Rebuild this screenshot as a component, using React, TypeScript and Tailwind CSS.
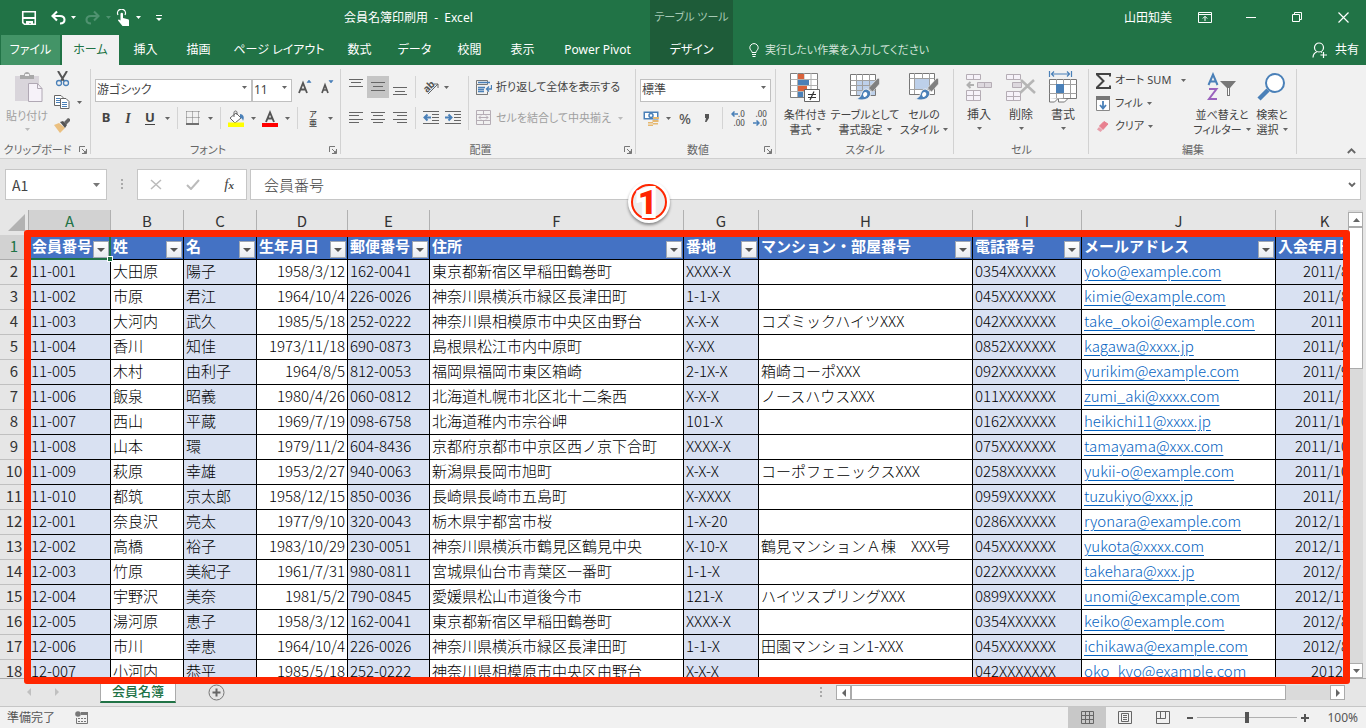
import React from "react";

type Kids = { children?: React.ReactNode };

const UI = "font-['Noto_Sans','Noto_Sans_CJK_JP',sans-serif] [font-feature-settings:'palt']";
const CELL = "font-['Noto_Sans_CJK_JP',sans-serif] [font-feature-settings:normal]";

function Ico({ w, h, children }: Kids & { w: number; h: number }) {
  return (
    <svg width={w} height={h} viewBox={`0 0 ${w} ${h}`} fill="none" className="shrink-0" aria-hidden="true">
      {children}
    </svg>
  );
}

function Caret({ color = "#666" }: { color?: string }) {
  return (
    <Ico w={5} h={3}>
      <path d="M0 0h5L2.5 3z" fill={color} />
    </Ico>
  );
}

function CaretButton({ label, color, className = "w-3" }: { label: string; color?: string; className?: string }) {
  return (
    <button aria-label={label} className={`flex h-[22px] shrink-0 items-center justify-center ${className}`}>
      <Caret color={color} />
    </button>
  );
}

function Tool({ label, active, children }: Kids & { label: string; active?: boolean }) {
  return (
    <button
      aria-label={label}
      className={`flex h-[22px] w-[22px] shrink-0 items-center justify-center ${active ? "bg-[#c5c5c5]" : ""}`}
    >
      {children}
    </button>
  );
}

function Sep() {
  return <div className="mx-1 h-[22px] w-px shrink-0 bg-[#d4d4d4]" />;
}

function Launcher() {
  return (
    <button aria-label="詳細設定" className="absolute right-1 bottom-1">
      <Ico w={8} h={8}>
        <path d="M.5 6V.5H6M3 3l3 3M7.5 3v4.5H3" stroke="#777" />
        <path d="M7.5 4v3.5H4z" fill="#777" />
      </Ico>
    </button>
  );
}

function Group({ title, width, launcher, children }: Kids & { title: string; width: string; launcher?: boolean }) {
  return (
    <section aria-label={title} className={`relative flex shrink-0 flex-col ${width}`}>
      <div className="h-[76px]">{children}</div>
      <div className="text-center text-[11px] leading-[17px] text-[#666]">{title}</div>
      {launcher && <Launcher />}
      <div className="absolute top-1 right-0 h-[85px] w-px bg-[#d2d2d2]" />
    </section>
  );
}

function Lines({ rows }: { rows: [number, number, number][] }) {
  return (
    <Ico w={16} h={16}>
      {rows.map(([x1, x2, y], i) => (
        <path key={i} d={`M${x1} ${y}.5H${x2}`} stroke="#666" />
      ))}
    </Ico>
  );
}

function Big({ width, icon, lines }: { width: string; icon: React.ReactNode; lines: string[] }) {
  return (
    <button className={`flex shrink-0 flex-col items-center text-[11px] leading-[15px] whitespace-nowrap text-[#444] ${width}`}>
      <span className="mb-1 flex h-[32px] items-center">{icon}</span>
      <span>{lines[0]}</span>
      <span className="flex h-[15px] items-center gap-1">
        {lines[1]}
        <Caret />
      </span>
    </button>
  );
}

const Brush = () => (
  <>
    <path d="M29 7l1.500 1v5l-7 8-4-4z" fill="#808080" stroke="#f1f1f1" strokeWidth=".6" />
    <path d="M18 18c-4 0-5 3-6 6-1 2-2 3-5 4 5 2 12 1 14-3 1-2 1-4 0-5z" fill="#4a80b8" stroke="#f1f1f1" />
    <path d="M14 24c0-3 3-4 4-2s-1 4-3 4" fill="#fff" />
  </>
);

function TopTab({ children, width, kind = "plain" }: Kids & { width: string; kind?: "plain" | "file" | "active" }) {
  const look = { plain: "text-white", file: "ml-px mr-0.5 bg-[#439467] text-white", active: "bg-[#f1f1f1] text-[#217346]" }[kind];
  return (
    <button role="tab" className={`h-[30px] shrink-0 text-center text-[12px] whitespace-nowrap ${width} ${look}`}>
      {children}
    </button>
  );
}

function Header() {
  return (
    <header className="flex h-[65px] shrink-0 bg-[#217346] text-white">
      <div className="flex w-[650px] shrink-0 flex-col">
        <div className="flex h-[35px] items-center">
          <div className="flex w-[344px] items-center pl-[21px]">
            <button aria-label="上書き保存" className="mr-[14px]">
              <Ico w={16} h={16}>
                <path d="M1.75 1.75h12.5v12.5H3.5l-1.75-1.7z" stroke="#fff" strokeWidth="1.6" />
                <path d="M2 7h12v2H2zM5 11h7v4h-2v-2H8v2H5z" fill="#fff" />
              </Ico>
            </button>
            <button aria-label="元に戻す">
              <Ico w={15} h={16}>
                <path d="M1.5 6H9c3 0 4.500 1.500 4.500 3.800S12 13.500 9 13.500M6 1.500L1.500 6 6 10.500" stroke="#fff" strokeWidth="2.100" />
              </Ico>
            </button>
            <CaretButton label="元に戻す履歴" color="#fff" className="ml-[1px] w-[12px]" />
            <button aria-label="やり直し" className="ml-[6px]">
              <Ico w={15} h={16}>
                <path d="M13.500 6H6C3 6 1.500 7.500 1.500 9.800S3 13.500 6 13.500M9 1.500L13.500 6 9 10.500" stroke="#4f9270" strokeWidth="2.100" />
              </Ico>
            </button>
            <CaretButton label="やり直し履歴" color="#4f9270" className="ml-[2px] w-[12px]" />
            <button aria-label="タッチ/マウス モードの切り替え" className="ml-[2px]">
              <Ico w={16} h={18}>
                <path d="M2 6a4 4 0 1 1 7 0" stroke="#fff" strokeWidth="1.200" />
                <path d="M4.500 5a1.200 1.200 0 0 1 2.500 0v4l5 1.200c1 .3 1 1 1 2V17H6.500L2 11.500c0-1.300 1-1.500 2.500 0z" fill="#fff" />
              </Ico>
            </button>
            <CaretButton label="モード" color="#fff" className="w-[12px]" />
            <button aria-label="クイック アクセス ツール バーのカスタマイズ" className="ml-3">
              <Ico w={6} h={6}>
                <path d="M0 .5h6" stroke="#fff" />
                <path d="M0 3h6L3 6z" fill="#fff" />
              </Ico>
            </button>
          </div>
          <h1 className="text-[12px] whitespace-pre">会員名簿印刷用  -  Excel</h1>
        </div>
        <div role="tablist" className="flex">
          <TopTab width="w-[59px]" kind="file">ファイル</TopTab>
          <TopTab width="w-[57px]" kind="active">ホーム</TopTab>
          <TopTab width="w-[53px]">挿入</TopTab>
          <TopTab width="w-[53px]">描画</TopTab>
          <TopTab width="w-[108px]">ページ レイアウト</TopTab>
          <TopTab width="w-[53px]">数式</TopTab>
          <TopTab width="w-[57px]">データ</TopTab>
          <TopTab width="w-[53px]">校閲</TopTab>
          <TopTab width="w-[53px]">表示</TopTab>
          <TopTab width="w-[97px]">Power Pivot</TopTab>
        </div>
      </div>
      <div className="flex w-[83px] shrink-0 flex-col items-center bg-[#1e5c39] text-[11px]">
        <div className="flex h-[35px] items-center whitespace-nowrap text-[#a6c9b4]">テーブル ツール</div>
        <TopTab width="w-[83px]">デザイン</TopTab>
      </div>
      <div className="flex min-w-0 flex-1 flex-col text-[12px]">
        <div className="flex h-[35px] items-center justify-end">
          <span className="mr-[10px]">山田知美</span>
          <button aria-label="リボンの表示オプション" className="flex w-[46px] justify-center">
            <Ico w={14} h={11}>
              <path d="M.5.5h13v10H.5zM.5 2.500h13M7 9V4.500M4.800 6.500L7 4.300l2.200 2.200" stroke="#fff" />
            </Ico>
          </button>
          <button aria-label="最小化" className="flex w-[46px] justify-center">
            <Ico w={10} h={2}><path d="M0 .5h10" stroke="#fff" /></Ico>
          </button>
          <button aria-label="元に戻す(縮小)" className="flex w-[46px] justify-center">
            <Ico w={11} h={11}><path d="M.5 2.500h7v7h-7zM2.500 2.500v-2h7v7h-2" stroke="#fff" /></Ico>
          </button>
          <button aria-label="閉じる" className="flex w-[46px] justify-center">
            <Ico w={11} h={11}><path d="M.5.5l10 10M10.500.5l-10 10" stroke="#fff" strokeWidth="1.200" /></Ico>
          </button>
        </div>
        <div className="flex h-[30px] items-center justify-between pr-[7px] pl-4">
          <button className="flex items-center gap-[6px] text-[11px] text-[#d3e3da]">
            <Ico w={10} h={14}>
              <path d="M3 9.500C3 7.500.8 7 .8 4.800a4.200 4.200 0 0 1 8.400 0C9.200 7 7 7.500 7 9.500zM3 11.500h4M3.500 13.500h3" stroke="#fff" />
            </Ico>
            実行したい作業を入力してください
          </button>
          <button className="flex items-center gap-[7px]">
            <Ico w={16} h={17}>
              <circle cx="7" cy="5.500" r="4.500" stroke="#fff" strokeWidth="1.200" />
              <path d="M1 15.500c.2-3.500 2-5 4-5.700M9 9.800l1 .7M11.500 10v6M8.500 13H15" stroke="#fff" strokeWidth="1.200" />
            </Ico>
            共有
          </button>
        </div>
      </div>
    </header>
  );
}

function ClipboardGroup() {
  return (
    <Group title="クリップボード" width="w-[91px] pr-4" launcher>
      <div className="flex pt-[6px]">
        <button className="flex w-[54px] shrink-0 flex-col items-center text-[11px] leading-[15px] whitespace-nowrap text-[#a0a0a0]">
          <span className="mb-1 h-[33px] pl-1">
            <Ico w={30} h={32}>
              <path d="M1 5h24v25H1z" fill="#d9d5db" />
              <path d="M6 8V4h4c0-4 6-4 6 0h4v4z" fill="#a9a9a9" />
              <path d="M11 3h4v2h-4z" fill="#f1f1f1" />
              <path d="M14.500 12.500h9l4.500 5v13H14.500z" fill="#f6f2f9" stroke="#b0a8b4" />
              <path d="M23.500 12.500v5H28" stroke="#b0a8b4" />
            </Ico>
          </span>
          貼り付け
          <span className="flex h-3 items-center"><Caret color="#bbb" /></span>
        </button>
        <div className="flex shrink-0 flex-col">
          <button aria-label="切り取り" className="flex h-[16px] items-center pl-px">
            <Ico w={16} h={16}>
              <path d="M3 0l6 10M12 0L6 10" stroke="#555" strokeWidth="2" />
              <circle cx="4" cy="12" r="2.500" stroke="#4a80b8" strokeWidth="1.300" />
              <circle cx="11" cy="12" r="2.500" stroke="#4a80b8" strokeWidth="1.300" />
            </Ico>
          </button>
          <div className="mt-[4px] flex">
            <button aria-label="コピー" className="flex h-[22px] items-center">
              <Ico w={17} h={15}>
                <path d="M.5.5H7l2 2v8H.5z" fill="#fff" stroke="#666" />
                <path d="M2 3.500h4M2 5.500h4M2 7.500h4" stroke="#4a80b8" />
                <path d="M6.500 3.500H12l3 3v7H6.500z" fill="#fff" stroke="#666" />
                <path d="M8 7.500h5M8 9.500h5M8 11.500h5" stroke="#4a80b8" />
              </Ico>
            </button>
            <CaretButton label="コピーのオプション" className="ml-[2px] w-3" />
          </div>
          <button aria-label="書式のコピー/貼り付け" className="mt-[4px] flex h-[16px] items-center">
            <Ico w={17} h={15}>
              <path d="M0 7l5-2 6 5-5 5z" fill="#ebc080" />
              <path d="M6 4l3-1 4 4-2 3z" fill="#555" />
              <path d="M10 4l4-4 2 1v2l-4 4z" fill="#666" />
            </Ico>
          </button>
        </div>
      </div>
    </Group>
  );
}

function Combo({ label, value, width }: { label: string; value: string; width: string }) {
  return (
    <div className={`relative h-[23px] shrink-0 ${width}`}>
      <select aria-label={label} className="h-full w-full appearance-none border border-[#c0c0c0] bg-white pl-px text-[12px] text-[#444]">
        <option>{value}</option>
      </select>
      <span className="pointer-events-none absolute top-[10px] right-[5px]"><Caret /></span>
    </div>
  );
}

function FontGroup() {
  return (
    <Group title="フォント" width="w-[250px] pr-4" launcher>
      <div className="flex flex-col gap-2 pt-[11px] pl-1">
        <div className="flex">
          <Combo label="フォント" value="游ゴシック" width="w-[157px]" />
          <Combo label="フォント サイズ" value="11" width="w-[40px]" />
          <div className="flex pl-[2px]">
            <Tool label="フォント サイズの拡大">
              <Ico w={14} h={16}>
                <path d="M1 14L5 4l4 10M2.500 10.500h5" stroke="#555" strokeWidth="1.800" />
                <path d="M9 3.500h4L11 1z" fill="#4a80b8" stroke="#4a80b8" strokeWidth=".6" />
              </Ico>
            </Tool>
            <Tool label="フォント サイズの縮小">
              <Ico w={14} h={16}>
                <path d="M2 14l3-8 3 8M3 11h4" stroke="#555" strokeWidth="1.700" />
                <path d="M9 1.500h4L11 4z" fill="#4a80b8" stroke="#4a80b8" strokeWidth=".6" />
              </Ico>
            </Tool>
          </div>
        </div>
        <div className="flex text-[13px] text-[#444]">
          <Tool label="太字"><b>B</b></Tool>
          <Tool label="斜体"><b className="font-['Liberation_Serif'] text-[14px] italic">I</b></Tool>
          <Tool label="下線"><b className="border-b border-[#444] leading-[13px]">U</b></Tool>
          <CaretButton label="下線の種類" />
          <Sep />
          <Tool label="罫線">
            <Ico w={14} h={14}>
              <path d="M.5.5h13M.5 6.500h13M.5.5v12M6.500.5v12M12.500.5v12" stroke="#777" strokeDasharray="1 1" />
              <path d="M0 13h13" stroke="#444" strokeWidth="1.500" />
            </Ico>
          </Tool>
          <CaretButton label="罫線の種類" />
          <Sep />
          <Tool label="塗りつぶしの色">
            <Ico w={17} h={17}>
              <path d="M8 3l5 5-6 5-5-5z" fill="#fff" stroke="#666" />
              <path d="M6 7V2.500c0-2 3-2 3 0V5" stroke="#666" />
              <path d="M12 4c3 0 5 3 3 7-.5-2-1-3-3-3z" fill="#4a80b8" />
              <path d="M0 12.500h16V17H0z" fill="#ff0" />
            </Ico>
          </Tool>
          <CaretButton label="塗りつぶしの色一覧" />
          <Tool label="フォントの色">
            <Ico w={16} h={17}>
              <path d="M4 12L8 2.500l4 9.500M5.500 8.500h5" stroke="#555" strokeWidth="1.900" />
              <path d="M0 13h16v4H0z" fill="#f00" />
            </Ico>
          </Tool>
          <CaretButton label="フォントの色一覧" />
          <Sep />
          <Tool label="ふりがなの表示/非表示">
            <span className="flex flex-col text-[8px] leading-[9px] font-medium"><span>ア</span><span>亜</span></span>
          </Tool>
          <CaretButton label="ふりがな" />
        </div>
      </div>
    </Group>
  );
}

function AlignGroup() {
  return (
    <Group title="配置" width="w-[295px] pr-4" launcher>
      <div className="flex pt-[11px] pl-1">
        <div className="flex flex-col gap-2">
          <div className="flex h-[23px]">
            <Tool label="上揃え"><Lines rows={[[1, 15, 0], [3, 13, 3], [1, 15, 7]]} /></Tool>
            <Tool label="上下中央揃え" active><Lines rows={[[1, 15, 3], [3, 13, 7], [1, 15, 11]]} /></Tool>
            <Tool label="下揃え"><Lines rows={[[1, 15, 8], [3, 13, 12], [1, 15, 15]]} /></Tool>
            <Sep />
            <Tool label="方向">
              <Ico w={17} h={17}>
                <text x="0" y="11" transform="rotate(-45 6 8)" fontSize="10" fontWeight="700" fill="#555">ab</text>
                <path d="M5 15L15 5M11 5h4v4" stroke="#666" />
              </Ico>
            </Tool>
            <CaretButton label="方向の種類" className="w-2" />
          </div>
          <div className="flex">
            <Tool label="左揃え"><Lines rows={[[1, 15, 2], [1, 11, 5], [1, 15, 9], [1, 11, 12]]} /></Tool>
            <Tool label="中央揃え"><Lines rows={[[1, 15, 2], [3, 13, 5], [1, 15, 9], [3, 13, 12]]} /></Tool>
            <Tool label="右揃え"><Lines rows={[[1, 15, 2], [5, 15, 5], [1, 15, 9], [5, 15, 12]]} /></Tool>
            <Sep />
            <Tool label="インデントを減らす">
              <Ico w={16} h={14}>
                <path d="M0 .5h16M9 3.500h7M9 6.500h7M9 9.500h7M0 12.500h16" stroke="#666" />
                <path d="M8 6.500H2M4.500 3.500l-3 3 3 3" stroke="#4a80b8" strokeWidth="2" />
              </Ico>
            </Tool>
            <Tool label="インデントを増やす">
              <Ico w={16} h={14}>
                <path d="M0 .5h16M9 3.500h7M9 6.500h7M9 9.500h7M0 12.500h16" stroke="#666" />
                <path d="M0 6.500h6M3.500 3.500l3 3-3 3" stroke="#4a80b8" strokeWidth="2" />
              </Ico>
            </Tool>
          </div>
        </div>
        <div className="mx-[4px] h-[54px] w-px shrink-0 bg-[#d4d4d4]" />
        <div className="flex flex-col gap-2 pl-[3px] text-[11px] whitespace-nowrap">
          <button className="flex h-[23px] items-center gap-1 text-[#444]">
            <Ico w={16} h={16}>
              <path d="M.5.5h11v4H.5zM.5 4.500v10h11v-3M.5 14.500h11" stroke="#777" />
              <path d="M2 2.500h12M2 7.500h7M2 9.500h6M2 11.500h6M15.500 5v4H11M13 6.500L10.500 9l2.500 2.500" stroke="#4a80b8" strokeWidth="1.300" />
            </Ico>
            折り返して全体を表示する
          </button>
          <div className="flex items-center">
            <button className="flex h-[22px] items-center gap-1 text-[#a0a0a0]">
              <Ico w={16} h={16}>
                <path d="M.5.5h14v14H.5zM.5 4.500h14M.5 10.500h14M7.500.5v4M7.500 10.500v4M3 7.500h9M5 5.500l-2 2 2 2M10 5.500l2 2-2 2" stroke="#b5adb5" />
              </Ico>
              セルを結合して中央揃え
            </button>
            <CaretButton label="結合の種類" color="#bbb" className="ml-1 w-3" />
          </div>
        </div>
      </div>
    </Group>
  );
}

function NumberGroup() {
  return (
    <Group title="数値" width="w-[140px] pr-4" launcher>
      <div className="flex w-[136px] flex-col gap-2 pt-[11px] pl-1">
        <Combo label="表示形式" value="標準" width="w-[131px]" />
        <div className="flex text-[#555]">
          <Tool label="通貨表示形式">
            <Ico w={17} h={17}>
              <path d="M.5 1.500h15v8H.5z" fill="#4a80b8" />
              <path d="M2 3h12v5H2z" fill="#fff" />
              <circle cx="8" cy="5.500" r="2" stroke="#4a80b8" strokeWidth="1.500" />
              <path d="M10 7h6v2h-6zM9.500 10h6v2h-6zM5 12h5v1.500H5zM5 14.500h5V16H5zM10 13h5v1.500h-5z" fill="#e6b870" />
            </Ico>
          </Tool>
          <CaretButton label="通貨の種類" />
          <Tool label="パーセント スタイル"><span className="text-[14px] font-medium">%</span></Tool>
          <Tool label="桁区切りスタイル">
            <Ico w={6} h={9}><path d="M1 0h4v4L2.500 8H1l1-4H1z" fill="#555" /></Ico>
          </Tool>
          <Sep />
          <Tool label="小数点以下の表示桁数を増やす">
            <span className="flex flex-col text-[8px] leading-[9px] font-medium">
              <span className="flex items-center"><Ico w={7} h={6}><path d="M7 3H1M3.500.5L1 3l2.500 2.500" stroke="#4a80b8" strokeWidth="1.500" /></Ico>.0</span>
              <span className="text-right">.00</span>
            </span>
          </Tool>
          <Tool label="小数点以下の表示桁数を減らす">
            <span className="flex flex-col text-[8px] leading-[9px] font-medium">
              <span className="text-right">.00</span>
              <span className="flex items-center"><Ico w={7} h={6}><path d="M0 3h6M3.500.5L6 3 3.500 5.500" stroke="#4a80b8" strokeWidth="1.500" /></Ico>.0</span>
            </span>
          </Tool>
        </div>
      </div>
    </Group>
  );
}

function StyleGroup() {
  return (
    <Group title="スタイル" width="w-[178px]">
      <div className="flex pt-[6px] pl-[2px]">
        <Big
          width="w-[54px]"
          lines={["条件付き", "書式"]}
          icon={
            <Ico w={32} h={32}>
              <path d="M1.500 2.500h27v24h-27z" fill="#fff" stroke="#808080" />
              <path d="M1.500 8.500h27M1.500 14.500h27M1.500 20.500h27M8.500 2v24M15 2v24M22 2v24" stroke="#b0b0b0" />
              <path d="M9 3h6v5H9zM9 15h9v5H9z" fill="#d9623b" />
              <path d="M9 9h11v5H9zM9 21h5v5H9z" fill="#4a80b8" />
              <path d="M15.500 18.500h15v12h-15z" fill="#fff" stroke="#666" />
              <path d="M19 23.500h8M19 26.500h8M25 20.500l-4 8.500" stroke="#333" strokeWidth="1.200" />
            </Ico>
          }
        />
        <Big
          width="w-[66px]"
          lines={["テーブルとして", "書式設定"]}
          icon={
            <Ico w={32} h={32}>
              <path d="M1.500 3.500h25v21h-25z" fill="#fff" stroke="#777" />
              <path d="M8 10h18v14H8z" fill="#bdd0ea" />
              <path d="M1.500 9.500h25M1.500 14.500h25M1.500 19.500h25M7.500 3v21M13.500 3v21M20.500 3v21" stroke="#a0a0a0" />
              <Brush />
            </Ico>
          }
        />
        <Big
          width="w-[52px]"
          lines={["セルの", "スタイル"]}
          icon={
            <Ico w={32} h={32}>
              <path d="M1.500 2.500h25v21h-25z" fill="#fff" stroke="#777" />
              <path d="M1.500 7.500h25M1.500 18.500h25M6.500 2v21M21.500 2v21M14.500 2v5M14.500 18v5" stroke="#a0a0a0" />
              <path d="M7 8h14v10H7z" fill="#bdd0ea" />
              <Brush />
            </Ico>
          }
        />
      </div>
    </Group>
  );
}

function CellsButton({ label, icon }: { label: string; icon: React.ReactNode }) {
  return (
    <button className="flex w-[42px] shrink-0 flex-col items-center text-[12px] leading-[15px] text-[#444]">
      <span className="mb-1 flex h-[32px] items-center">{icon}</span>
      {label}
      <span className="flex h-3 items-center"><Caret /></span>
    </button>
  );
}

function CellsGroup() {
  return (
    <Group title="セル" width="w-[135px]">
      <div className="flex pt-[6px] pl-1">
        <CellsButton
          label="挿入"
          icon={
            <Ico w={28} h={30}>
              <path d="M1.500 2.500h14v5h-14zM8.500 2.500v5M1.500 18.500h14v10h-14zM1.500 23.500h14M8.500 18.500v10" fill="#f6f2f9" stroke="#b5adb5" />
              <path d="M12.500 10.500h14v5h-14zM19.500 10.500v5" fill="#ddd8de" stroke="#b5adb5" />
              <path d="M9 13H3M5.500 10L2.500 13l3 3" stroke="#b0b0b0" strokeWidth="2" />
            </Ico>
          }
        />
        <CellsButton
          label="削除"
          icon={
            <Ico w={30} h={30}>
              <path d="M.5 2.500h14v5H.5zM7.500 2.500v5M.5 19.500h14v9H.5zM.5 24.500h14M7.500 19.500v9" fill="#f6f2f9" stroke="#b5adb5" />
              <path d="M6.500 10.500h9v5h-9z" fill="#ddd8de" stroke="#b5adb5" />
              <path d="M15 8l14 13M28 8L14 21" stroke="#b5b5b5" strokeWidth="2.500" />
            </Ico>
          }
        />
        <CellsButton
          label="書式"
          icon={
            <Ico w={30} h={32}>
              <path d="M1.500 0v6M23.500 0v6M4 3h17M6 .5L3.500 3 6 5.500M19 .5L21.500 3 19 5.500" stroke="#4a80b8" strokeWidth="1.200" />
              <path d="M1.500 8.500h27v19h-27z" fill="#fff" stroke="#777" />
              <path d="M1.500 13.500h27M1.500 22.500h27M8.500 8v19M15.500 8v19M22.500 8v19" stroke="#a0a0a0" />
              <path d="M8 13h8v9H8z" fill="#4a80b8" />
              <path d="M1.500 27v4h5l3-3h1v3h6l3-3" fill="#fff" stroke="#777" />
            </Ico>
          }
        />
      </div>
    </Group>
  );
}

function EditGroup() {
  const row = "flex h-[23px] items-center gap-[4px] whitespace-nowrap";
  return (
    <Group title="編集" width="w-[208px]">
      <div className="flex pt-[4px] pl-[7px] text-[11px] text-[#444]">
        <div className="flex w-[97px] shrink-0 flex-col">
          <div className="flex">
            <button className={row}>
              <Ico w={15} h={16}><path d="M14 3.500V1H1v.5L7.500 8 1 14.500v.5h13v-2.500" stroke="#444" strokeWidth="2" /></Ico>
              オート SUM
            </button>
            <CaretButton label="オート SUM の種類" className="ml-2 w-2" />
          </div>
          <button className={row}>
            <Ico w={15} h={16}>
              <path d="M.5 2.500h13v12H.5z" fill="#fff" stroke="#888" />
              <path d="M0 0h14v4H0z" fill="#777" />
              <path d="M7 5v7M4 9l3 3.500L10 9" stroke="#4a80b8" strokeWidth="1.800" />
            </Ico>
            フィル
            <Caret />
          </button>
          <button className={row}>
            <Ico w={15} h={14}>
              <path d="M8 1.500L12 4 7 9.500 3.500 6z" fill="#e8808f" stroke="#e8808f" />
              <path d="M3 7l3.500 3-2 2L1 9.500z" fill="#e8a0ac" />
            </Ico>
            クリア
            <Caret />
          </button>
        </div>
        <div className="-mr-2 flex pt-[2px]">
          <Big
            width="w-[58px]"
            lines={["並べ替えと", "フィルター"]}
            icon={
              <Ico w={30} h={30}>
                <path d="M1.500 13L6 2.500 10.500 13M3 9.500h6" stroke="#4a80b8" strokeWidth="2" />
                <path d="M2 17h7.500L2 27h8" stroke="#9a62bd" strokeWidth="2" />
                <path d="M13 9h16l-6 7v8h-3v-8z" fill="#777" />
                <path d="M21 16h1v7h-1z" fill="#fff" />
              </Ico>
            }
          />
          <Big
            width="w-[42px]"
            lines={["検索と", "選択"]}
            icon={
              <Ico w={30} h={30}>
                <path d="M11 18L2 27" stroke="#4a80b8" strokeWidth="4.500" />
                <circle cx="18" cy="11" r="9" fill="#fff" stroke="#4a80b8" strokeWidth="2" />
              </Ico>
            }
          />
        </div>
      </div>
    </Group>
  );
}

function Ribbon() {
  return (
    <div className="flex h-[94px] shrink-0 border-b border-[#cfcfcf] bg-[#f1f1f1]">
      <ClipboardGroup />
      <FontGroup />
      <AlignGroup />
      <NumberGroup />
      <StyleGroup />
      <CellsGroup />
      <EditGroup />
      <div className="flex flex-1 items-end justify-end pr-[10px] pb-1">
        <button aria-label="リボンを折りたたむ">
          <Ico w={9} h={6}><path d="M.8 5l3.700-3.700L8.200 5" stroke="#666" strokeWidth="1.800" /></Ico>
        </button>
      </div>
    </div>
  );
}

function FormulaBar() {
  return (
    <div className="flex h-[51px] shrink-0 items-start bg-[#e6e6e6] pt-[10px] pr-[5px] pl-[5px]">
      <div className="flex h-[31px] w-[102px] items-center border border-[#c6c6c6] bg-white">
        <input aria-label="名前ボックス" defaultValue="A1" className={`h-full w-[80px] pl-[6px] text-[14px] text-[#444] outline-none ${CELL}`} />
        <button aria-label="名前の一覧" className="pl-[7px]">
          <Ico w={7} h={4}><path d="M0 0h7L3.500 4z" fill="#777" /></Ico>
        </button>
      </div>
      <div className="flex h-[31px] w-[30px] items-center justify-center">
        <Ico w={2} h={11}><path d="M0 0h2v2H0zM0 4h2v2H0zM0 8h2v2H0z" fill="#aaa" /></Ico>
      </div>
      <div className="mr-[3px] flex h-[31px] w-[110px] items-center justify-around border border-[#c6c6c6] bg-white">
        <button aria-label="キャンセル"><Ico w={12} h={11}><path d="M1 1l10 9M11 1L1 10" stroke="#bbb" strokeWidth="1.500" /></Ico></button>
        <button aria-label="入力"><Ico w={14} h={11}><path d="M1 6l4 4 8-9" stroke="#bbb" strokeWidth="2" /></Ico></button>
        <button aria-label="関数の挿入" className="font-['Liberation_Serif',serif] text-[15px] leading-[16px] text-[#444] italic">
          f<span className="text-[11px] font-bold">x</span>
        </button>
      </div>
      <div className="flex h-[31px] min-w-0 flex-1 items-center border border-[#c6c6c6] bg-white pr-1">
        <input aria-label="数式バー" defaultValue="会員番号" className={`h-[26px] min-w-0 flex-1 pl-[13px] text-[15px] font-light text-[#444] outline-none ${CELL}`} />
        <button aria-label="数式バーの展開">
          <Ico w={8} h={6}><path d="M1 1l3 3 3-3" stroke="#666" strokeWidth="1.800" /></Ico>
        </button>
      </div>
    </div>
  );
}

const columns = [
  { id: "A", title: "会員番号", width: "w-[82px]" },
  { id: "B", title: "姓", width: "w-[73px]" },
  { id: "C", title: "名", width: "w-[73px]" },
  { id: "D", title: "生年月日", width: "w-[91px]" },
  { id: "E", title: "郵便番号", width: "w-[82px]" },
  { id: "F", title: "住所", width: "w-[254px]" },
  { id: "G", title: "番地", width: "w-[75px]" },
  { id: "H", title: "マンション・部屋番号", width: "w-[214px]" },
  { id: "I", title: "電話番号", width: "w-[109px]" },
  { id: "J", title: "メールアドレス", width: "w-[194px]" },
  { id: "K", title: "入会年月日", width: "w-[98px]" },
];

const members: string[][] = [
  ["11-001", "大田原", "陽子", "1958/3/12", "162-0041", "東京都新宿区早稲田鶴巻町", "XXXX-X", "", "0354XXXXXX", "yoko@example.com", "2011/8/10"],
  ["11-002", "市原", "君江", "1964/10/4", "226-0026", "神奈川県横浜市緑区長津田町", "1-1-X", "", "045XXXXXXX", "kimie@example.com", "2011/8/22"],
  ["11-003", "大河内", "武久", "1985/5/18", "252-0222", "神奈川県相模原市中央区由野台", "X-X-X", "コズミックハイツXXX", "042XXXXXXX", "take_okoi@example.com", "2011/9/1"],
  ["11-004", "香川", "知佳", "1973/11/18", "690-0873", "島根県松江市内中原町", "X-XX", "", "0852XXXXXX", "kagawa@xxxx.jp", "2011/9/12"],
  ["11-005", "木村", "由利子", "1964/8/5", "812-0053", "福岡県福岡市東区箱崎", "2-1X-X", "箱崎コーポXXX", "092XXXXXXX", "yurikim@example.com", "2011/9/20"],
  ["11-006", "飯泉", "昭義", "1980/4/26", "060-0812", "北海道札幌市北区北十二条西", "X-X-X", "ノースハウスXXX", "011XXXXXXX", "zumi_aki@xxxx.com", "2011/10/1"],
  ["11-007", "西山", "平蔵", "1969/7/19", "098-6758", "北海道稚内市宗谷岬", "101-X", "", "0162XXXXXX", "heikichi11@xxxx.jp", "2011/10/11"],
  ["11-008", "山本", "環", "1979/11/2", "604-8436", "京都府京都市中京区西ノ京下合町", "XXXX-X", "", "075XXXXXXX", "tamayama@xxx.com", "2011/10/15"],
  ["11-009", "萩原", "幸雄", "1953/2/27", "940-0063", "新潟県長岡市旭町", "X-X-X", "コーポフェニックスXXX", "0258XXXXXX", "yukii-o@example.com", "2011/10/28"],
  ["11-010", "都筑", "京太郎", "1958/12/15", "850-0036", "長崎県長崎市五島町", "X-XXXX", "", "0959XXXXXX", "tuzukiyo@xxx.jp", "2011/11/4"],
  ["12-001", "奈良沢", "亮太", "1977/9/10", "320-0043", "栃木県宇都宮市桜", "1-X-20", "", "0286XXXXXX", "ryonara@example.com", "2012/11/10"],
  ["12-002", "高橋", "裕子", "1983/10/29", "230-0051", "神奈川県横浜市鶴見区鶴見中央", "X-10-X", "鶴見マンションＡ棟　XXX号", "045XXXXXXX", "yukota@xxxx.com", "2012/11/18"],
  ["12-003", "竹原", "美紀子", "1961/7/31", "980-0811", "宮城県仙台市青葉区一番町", "1-1-X", "", "022XXXXXXX", "takehara@xxx.jp", "2012/12/1"],
  ["12-004", "宇野沢", "美奈", "1981/5/2", "790-0845", "愛媛県松山市道後今市", "121-X", "ハイツスプリングXXX", "0899XXXXXX", "unomi@excample.com", "2012/12/12"],
  ["12-005", "湯河原", "恵子", "1958/3/12", "162-0041", "東京都新宿区早稲田鶴巻町", "XXXX-X", "", "0354XXXXXX", "keiko@example.com", "2012/8/10"],
  ["12-006", "市川", "幸恵", "1964/10/4", "226-0026", "神奈川県横浜市緑区長津田町", "1-1-X", "田園マンション1-XXX", "045XXXXXXX", "ichikawa@example.com", "2012/8/22"],
  ["12-007", "小河内", "恭平", "1985/5/18", "252-0222", "神奈川県相模原市中央区由野台", "X-X-X", "", "042XXXXXXX", "oko_kyo@example.com", "2012/9/1"],
];

function Sheet() {
  return (
    <table className={`w-[1374px] table-fixed border-separate border-spacing-0 text-[15px] leading-[22px] text-black ${CELL}`}>
      <colgroup>
        <col className="w-[29px]" />
        {columns.map((c) => <col key={c.id} className={c.width} />)}
      </colgroup>
      <thead>
        <tr className="h-[25px]">
          <th className="border-r border-[#ababab] bg-[#e6e6e6] p-0 align-top">
            <svg width="28" height="24" viewBox="0 0 28 24" aria-hidden="true">
              <path d="M25 4v17H8z" fill="#b2b2b2" />
            </svg>
          </th>
          {columns.map((c) => (
            <th
              key={c.id}
              scope="col"
              className={`border-r border-[#b1b1b1] p-0 align-top font-normal ${c.id === "A" ? "bg-[#d2d2d2] text-[#217346]" : "bg-[#e6e6e6] text-[#333]"}`}
            >
              {c.id}
            </th>
          ))}
        </tr>
      </thead>
      <tbody>
        <tr className="h-[25px]">
          <th scope="row" className="border-r border-b border-[#ababab] bg-[#d2d2d2] p-0 align-top font-normal text-[#217346]">1</th>
          {columns.map((c) => (
            <td key={c.id} className="relative border-r border-b border-black bg-[#4472c4] p-0">
              <div className="flex h-[24px] items-center">
                <span className={`pb-[2px] font-bold whitespace-nowrap text-white ${c.id === "A" ? "pl-[3px]" : "pl-[2px]"}`}>{c.title}</span>
              </div>
              {c.id === "A" && (
                <>
                  <span className="absolute inset-0 -right-px -bottom-px border-2 border-[#217346]" />
                  <span className="absolute -right-[3px] -bottom-[3px] z-10 h-[6px] w-[6px] border border-white bg-[#217346]" />
                </>
              )}
              {c.id !== "K" && (
                <button
                  aria-label={`${c.title} のフィルター`}
                  className="absolute right-px bottom-px flex h-[17px] w-[16px] items-center justify-center border border-[#a0a8b4] bg-linear-to-b from-white to-[#e8ebf0]"
                >
                  <Ico w={8} h={4}><path d="M0 0h8L4 4z" fill="#555" /></Ico>
                </button>
              )}
            </td>
          ))}
        </tr>
        {members.map((m, r) => (
          <tr key={m[0]} className="h-[25px]">
            <th scope="row" className="border-r border-b border-[#c0c0c0] bg-[#e6e6e6] p-0 align-top font-normal text-[#333]">{r + 2}</th>
            {m.map((v, i) => (
              <td
                key={i}
                className={`overflow-hidden border-r border-b border-black p-0 align-top font-light whitespace-nowrap ${i % 2 === 0 ? "bg-[#d9e1f2]" : "bg-white"} ${i === 3 || i === 10 ? "pr-[2px] text-right" : "pl-[2px]"}`}
              >
                {i === 9 ? (
                  <a href={`mailto:${v}`} className="text-[#0563c1] underline underline-offset-3">{v}</a>
                ) : (
                  v
                )}
              </td>
            ))}
          </tr>
        ))}
      </tbody>
    </table>
  );
}

function Arrow({ d, color = "#666" }: { d: string; color?: string }) {
  return <Ico w={8} h={8}><path d={d} fill={color} /></Ico>;
}

function Grid() {
  return (
    <main className="relative flex min-h-0 flex-1 bg-[#e6e6e6]">
      <div className="min-w-0 flex-1 overflow-hidden"><Sheet /></div>
      <div className="mr-[3px] flex w-[15px] shrink-0 flex-col bg-[#dadada] pt-[2px]">
        <button aria-label="上へスクロール" className="flex h-[15px] items-center justify-center border border-[#ababab] bg-white">
          <Arrow d="M1 6h7L4.500 2z" />
        </button>
        <div className="h-[142px] border border-[#ababab] bg-white" />
        <div className="flex-1" />
        <button aria-label="下へスクロール" className="flex h-[15px] items-center justify-center border border-[#ababab] bg-white">
          <Arrow d="M1 2h7L4.500 6z" />
        </button>
      </div>
      <div className="pointer-events-none absolute top-5 right-4 -bottom-[6px] left-6 z-20 rounded-[3px] border-7 border-[#ff2600]" />
      <div className="absolute -top-[29px] left-[628px] z-30 flex h-[42px] w-[42px] items-center justify-center rounded-full bg-white shadow-[0_2px_3px_rgba(0,0,0,0.4)]">
        <div className="flex h-[36px] w-[36px] items-center justify-center rounded-full border-2 border-[#ff2600] bg-[#ececec] pr-[3px] font-[Roboto,sans-serif] text-[34px] leading-[32px] font-black text-[#ff2600] [-webkit-text-stroke:8px_white] [paint-order:stroke_fill]">
          1
        </div>
      </div>
    </main>
  );
}

function SheetBar() {
  return (
    <div className="flex h-[28px] shrink-0 items-start border-t border-[#ababab] bg-[#e6e6e6]">
      <div className="flex h-[26px] w-[100px] items-center gap-5 pl-[25px]">
        <button aria-label="前のシート"><Arrow d="M6 0v8L2 4z" color="#c0c0c0" /></button>
        <button aria-label="次のシート"><Arrow d="M2 0v8l4-4z" color="#c0c0c0" /></button>
      </div>
      <button className={`h-[24px] w-[76px] border-x border-b-2 border-x-[#ababab] border-b-[#217346] bg-white text-[13px] leading-[24px] font-medium text-[#217346] ${CELL}`}>
        会員名簿
      </button>
      <button aria-label="新しいシート" className="mt-[5px] ml-8">
        <Ico w={17} h={17}>
          <circle cx="8.500" cy="8.500" r="7.500" stroke="#777" />
          <path d="M8.500 4.500v8M4.500 8.500h8" stroke="#666" strokeWidth="2" />
        </Ico>
      </button>
      <div className="ml-auto flex pt-[6px]">
        <div className="mr-[14px] flex h-[15px] items-center">
          <Ico w={2} h={11}><path d="M0 0h2v2H0zM0 4h2v2H0zM0 8h2v2H0z" fill="#aaa" /></Ico>
        </div>
        <div className="mr-[21px] flex h-[15px] w-[509px] bg-[#dadada]">
          <button aria-label="左へスクロール" className="flex w-[15px] items-center justify-center border border-[#ababab] bg-white">
            <Arrow d="M6 0v8L2 4z" />
          </button>
          <div className="w-[435px] border border-[#ababab] bg-white" />
          <button aria-label="右へスクロール" className="ml-auto flex w-[15px] items-center justify-center border border-[#ababab] bg-white">
            <Arrow d="M2 0v8l4-4z" />
          </button>
        </div>
      </div>
    </div>
  );
}

function StatusBar() {
  return (
    <footer className="flex h-[22px] shrink-0 items-center border-t border-[#c6c6c6] bg-[#f1f1f1] pl-[7px] text-[12px] text-[#555]">
      準備完了
      <button aria-label="マクロの記録" className="ml-5">
        <Ico w={14} h={14}>
          <circle cx="3" cy="3" r="2.800" fill="#777" />
          <path d="M6 1h7v3H6z" fill="#777" />
          <path d="M3 7.500h8M3 10.500h8" stroke="#777" strokeDasharray="2 1" />
          <path d="M1.500 7v5.500h11V3" stroke="#777" />
        </Ico>
      </button>
      <div className="ml-auto flex h-full items-center">
        <button aria-label="標準" className="flex h-full w-[38px] items-center justify-center bg-[#c8c8c8]">
          <Ico w={13} h={13}><path d="M.5.5h12v12H.5zM.5 4.500h12M.5 8.500h12M4.500.5v12M8.500.5v12" stroke="#666" /></Ico>
        </button>
        <button aria-label="ページ レイアウト" className="flex h-full w-[38px] items-center justify-center">
          <Ico w={14} h={13}><path d="M.5.5h13v12H.5zM3.500 2.500h7v8h-7zM5 4.500h4M5 6.500h4M5 8.500h4" stroke="#666" /></Ico>
        </button>
        <button aria-label="改ページ プレビュー" className="flex h-full w-[38px] items-center justify-center">
          <Ico w={14} h={13}><path d="M.5.5h13v12H.5zM4.500.5v7M9.500.5v7M.5 7.500h9" stroke="#666" /></Ico>
        </button>
        <button aria-label="縮小" className="mr-1 ml-[5px]"><Ico w={6} h={8}><path d="M0 4h6" stroke="#555" strokeWidth="2" /></Ico></button>
        <input
          type="range"
          aria-label="ズーム"
          defaultValue={50}
          className="h-3 w-[100px] appearance-none bg-transparent bg-[linear-gradient(#b0b0b0,#b0b0b0)] bg-[length:100%_1px] bg-center bg-no-repeat [&::-webkit-slider-thumb]:h-[11px] [&::-webkit-slider-thumb]:w-1 [&::-webkit-slider-thumb]:appearance-none [&::-webkit-slider-thumb]:bg-[#555]"
        />
        <button aria-label="拡大" className="ml-[4px]"><Ico w={8} h={8}><path d="M0 4h8M4 0v8" stroke="#555" strokeWidth="2" /></Ico></button>
        <button className="w-[57px] pr-2 text-right">100%</button>
      </div>
    </footer>
  );
}

export default function App() {
  return (
    <div className={`flex h-screen flex-col overflow-hidden bg-[#e6e6e6] ${UI}`}>
      <Header />
      <Ribbon />
      <FormulaBar />
      <Grid />
      <SheetBar />
      <StatusBar />
    </div>
  );
}
